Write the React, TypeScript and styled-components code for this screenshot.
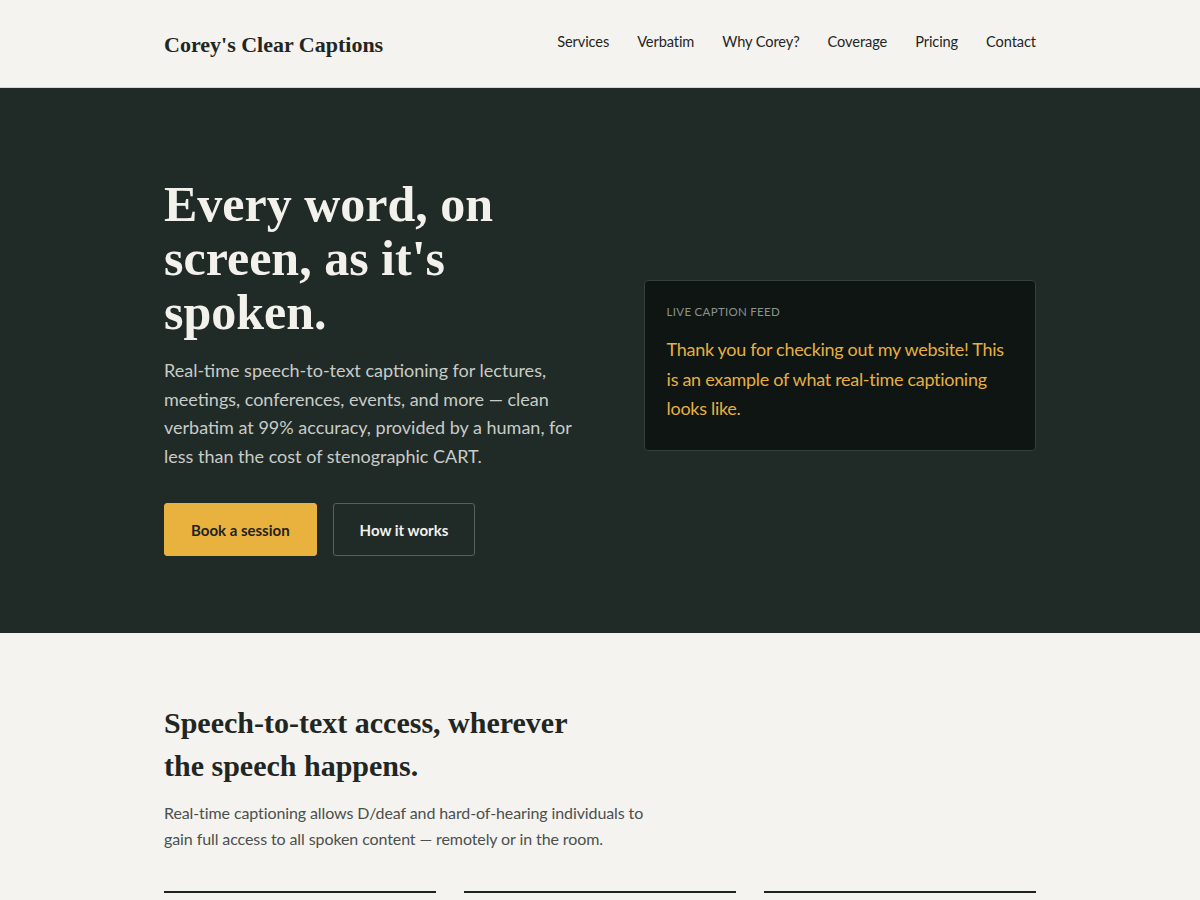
import React from 'react';
import styled, { createGlobalStyle } from 'styled-components';

const GlobalStyle = createGlobalStyle`
  html, body {
    margin: 0;
    padding: 0;
    background: #f5f3ef;
  }
  body {
    font-family: Lato, "Noto Sans", sans-serif;
    color: #1f2623;
  }
  * {
    box-sizing: border-box;
  }
`;

const serif = `"Liberation Serif", "DejaVu Serif", serif`;

const Container = styled.div`
  width: 872px;
  margin: 0 auto;
`;

const Header = styled.header`
  background: #f5f3ef;
  border-bottom: 1px solid #d9d6cf;
`;

const HeaderInner = styled(Container)`
  height: 87px;
  display: flex;
  align-items: center;
  justify-content: space-between;
`;

const Logo = styled.a`
  font-family: ${serif};
  font-weight: 700;
  font-size: 22px;
  color: #1f2623;
  text-decoration: none;
  margin-top: 3px;
`;

const Nav = styled.nav`
  display: flex;
  gap: 28px;
  margin-top: -4px;
`;

const NavLink = styled.a`
  font-size: 14.6px;
  letter-spacing: -0.1px;
  color: #1f2623;
  text-decoration: none;
`;

const Hero = styled.section`
  background: #202a27;
  padding: 89px 0 77px;
`;

const HeroGrid = styled(Container)`
  display: grid;
  grid-template-columns: 1.1fr 1fr;
  gap: 48px;
  align-items: center;
`;

const HeroTitle = styled.h1`
  font-family: ${serif};
  font-weight: 700;
  font-size: 50px;
  line-height: 54px;
  color: #f3f1ec;
  margin: 0 0 17px;
  max-width: 400px;
`;

const HeroText = styled.p`
  font-size: 18px;
  line-height: 28.6px;
  color: #c9ccc8;
  margin: 0 0 33px;
  max-width: 410px;
`;

const Actions = styled.div`
  display: flex;
  gap: 16px;
`;

const Button = styled.a<{ $primary?: boolean }>`
  display: inline-flex;
  align-items: center;
  justify-content: center;
  height: 53px;
  padding: 0 26px;
  border-radius: 3px;
  font-size: 15px;
  font-weight: 700;
  text-decoration: none;
  background: ${({ $primary }) => ($primary ? '#e9b23f' : 'transparent')};
  color: ${({ $primary }) => ($primary ? '#1f2320' : '#f3f1ec')};
  border: 1px solid ${({ $primary }) => ($primary ? '#e9b23f' : '#56605c')};
`;

const FeedCard = styled.div`
  background: #0e1513;
  border: 1px solid #34403c;
  border-radius: 4px;
  padding: 24px 20px 26px 22px;
  margin-top: -2px;
`;

const FeedLabel = styled.div`
  font-size: 11.5px;
  letter-spacing: 0.3px;
  text-transform: uppercase;
  color: #8b928f;
  margin-bottom: 17px;
`;

const FeedText = styled.p`
  font-size: 18px;
  letter-spacing: -0.3px;
  line-height: 29.5px;
  color: #e6b040;
  margin: 0;
`;

const Intro = styled.section`
  padding: 68px 0 0;
`;

const IntroTitle = styled.h2`
  font-family: ${serif};
  font-weight: 700;
  font-size: 30px;
  line-height: 43px;
  color: #1f2623;
  margin: 0 0 13px;
  max-width: 430px;
`;

const IntroText = styled.p`
  font-size: 16px;
  letter-spacing: -0.1px;
  line-height: 26px;
  color: #4a504d;
  margin: 0 0 39px;
  max-width: 500px;
`;

const Columns = styled.div`
  display: grid;
  grid-template-columns: repeat(3, 1fr);
  gap: 28px;
`;

const Column = styled.div`
  border-top: 2px solid #1f2320;
  height: 60px;
`;

export default function App() {
  return (
    <>
      <GlobalStyle />
      <Header>
        <HeaderInner>
          <Logo href="#">Corey's Clear Captions</Logo>
          <Nav>
            {['Services', 'Verbatim', 'Why Corey?', 'Coverage', 'Pricing', 'Contact'].map((item) => (
              <NavLink key={item} href="#">
                {item}
              </NavLink>
            ))}
          </Nav>
        </HeaderInner>
      </Header>

      <Hero>
        <HeroGrid>
          <div>
            <HeroTitle>Every word, on screen, as it's spoken.</HeroTitle>
            <HeroText>
              Real-time speech-to-text captioning for lectures, meetings, conferences, events, and more — clean
              verbatim at 99% accuracy, provided by a human, for less than the cost of stenographic CART.
            </HeroText>
            <Actions>
              <Button $primary href="#">
                Book a session
              </Button>
              <Button href="#">How it works</Button>
            </Actions>
          </div>
          <FeedCard>
            <FeedLabel>Live caption feed</FeedLabel>
            <FeedText>
              Thank you for checking out my website! This is an example of what real-time captioning looks like.
            </FeedText>
          </FeedCard>
        </HeroGrid>
      </Hero>

      <Intro>
        <Container>
          <IntroTitle>Speech-to-text access, wherever the speech happens.</IntroTitle>
          <IntroText>
            Real-time captioning allows D/deaf and hard-of-hearing individuals to gain full access to all spoken
            content — remotely or in the room.
          </IntroText>
          <Columns>
            <Column />
            <Column />
            <Column />
          </Columns>
        </Container>
      </Intro>
    </>
  );
}
